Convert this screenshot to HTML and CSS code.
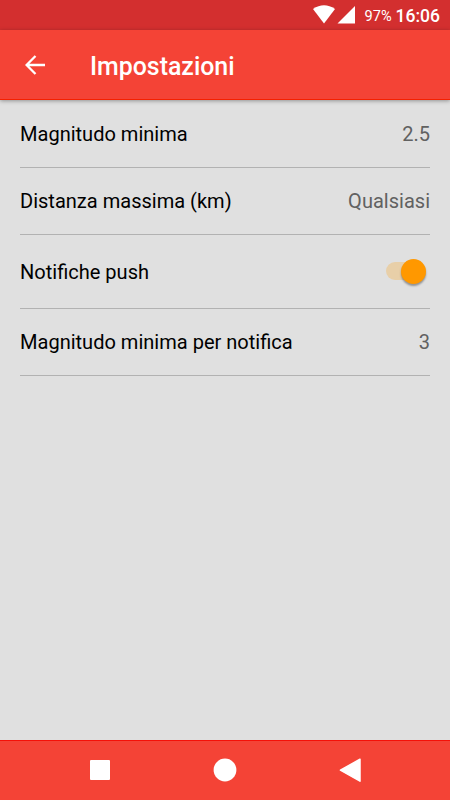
FILE: index.html
```html
<!DOCTYPE html>
<html lang="it">
<head>
<meta charset="utf-8">
<title>Impostazioni</title>
<link rel="stylesheet" href="styles.css">
</head>
<body>
<div class="screen">
  <div class="status">
    <svg class="signals" width="43" height="20" viewBox="0 0 43 20" fill="#fff"><path d="M0 4.1Q11 -3.4 22 4.1L11 18.6Z"/><path d="M24.5 18.6L42 1V18.6Z"/></svg>
    <span class="battery">97%</span>
    <span class="clock">16:06</span>
  </div>
  <header class="toolbar">
    <svg class="back" width="20" height="20" viewBox="0 0 20 20" fill="none" stroke="#fff" stroke-width="2.3"><path d="M20 10H2M10.5 1L1.6 10L10.5 19"/></svg>
    <h1 class="title">Impostazioni</h1>
  </header>
  <main class="settings">
    <div class="row"><span class="label">Magnitudo minima</span><span class="value">2.5</span></div>
    <div class="row"><span class="label">Distanza massima (km)</span><span class="value">Qualsiasi</span></div>
    <div class="row row-switch"><span class="label">Notifiche push</span><span class="switch"><span class="thumb"></span></span></div>
    <div class="row"><span class="label">Magnitudo minima per notifica</span><span class="value">3</span></div>
  </main>
  <nav class="navbar">
    <svg width="26" height="26" viewBox="0 0 26 26" fill="#fff"><rect x="3" y="3" width="20" height="20" rx="1"/></svg>
    <svg width="26" height="26" viewBox="0 0 26 26" fill="#fff"><circle cx="13" cy="13" r="11.4"/></svg>
    <svg width="26" height="26" viewBox="0 0 26 26" fill="#fff" stroke="#fff" stroke-width="1.5" stroke-linejoin="round"><path d="M3.4 13.2L23 2.2V24.2Z"/></svg>
  </nav>
</div>
</body>
</html>
```

FILE: styles.css
```css
* { box-sizing: border-box; }
body { margin: 0; font-family: Roboto, sans-serif; }
.screen { display: flex; flex-direction: column; width: 450px; height: 800px; background: #e0e0e0; }
.status { display: flex; justify-content: flex-end; align-items: center; height: 30px; padding-right: 10px; background: #d32f2f; color: #fff; }
.signals { margin: 0 9px 0 0; }
.battery { margin-right: 4px; font-size: 14.6px; line-height: 30px; padding-top: 1px; }
.clock { font-size: 17.5px; font-weight: 500; line-height: 30px; padding-top: 1px; }
.toolbar { display: flex; align-items: center; height: 70px; padding: 0 25px; background: #f44336; border-bottom: 1px solid #f52000; box-shadow: 0 1px 4px rgba(0,0,0,.35); }
.back { margin-top: 1px; }
.title { margin: 5px 0 0 45px; font-size: 24.9px; font-weight: 500; line-height: 30px; color: #fff; }
.settings { flex: 1; padding: 1px 20px 0; }
.row { display: flex; justify-content: space-between; align-items: center; height: 67px; border-bottom: 1px solid #b2b2b2; font-size: 20.05px; color: #000; }
.row-switch { height: 74px; }
.value { color: #616161; }
.switch { display: flex; align-items: center; justify-content: flex-end; width: 38px; height: 18px; margin: 0 6px 1px 0; border-radius: 9px; background: #e8cfa8; }
.thumb { flex: none; width: 25px; height: 25px; margin-right: -2px; border-radius: 50%; background: #ff9800; box-shadow: 0 2px 2px rgba(0,0,0,.35); }
.navbar { display: flex; justify-content: space-between; align-items: center; height: 60px; padding: 0 87px 1px; background: #f44336; border-top: 1px solid #f51008; }
```
